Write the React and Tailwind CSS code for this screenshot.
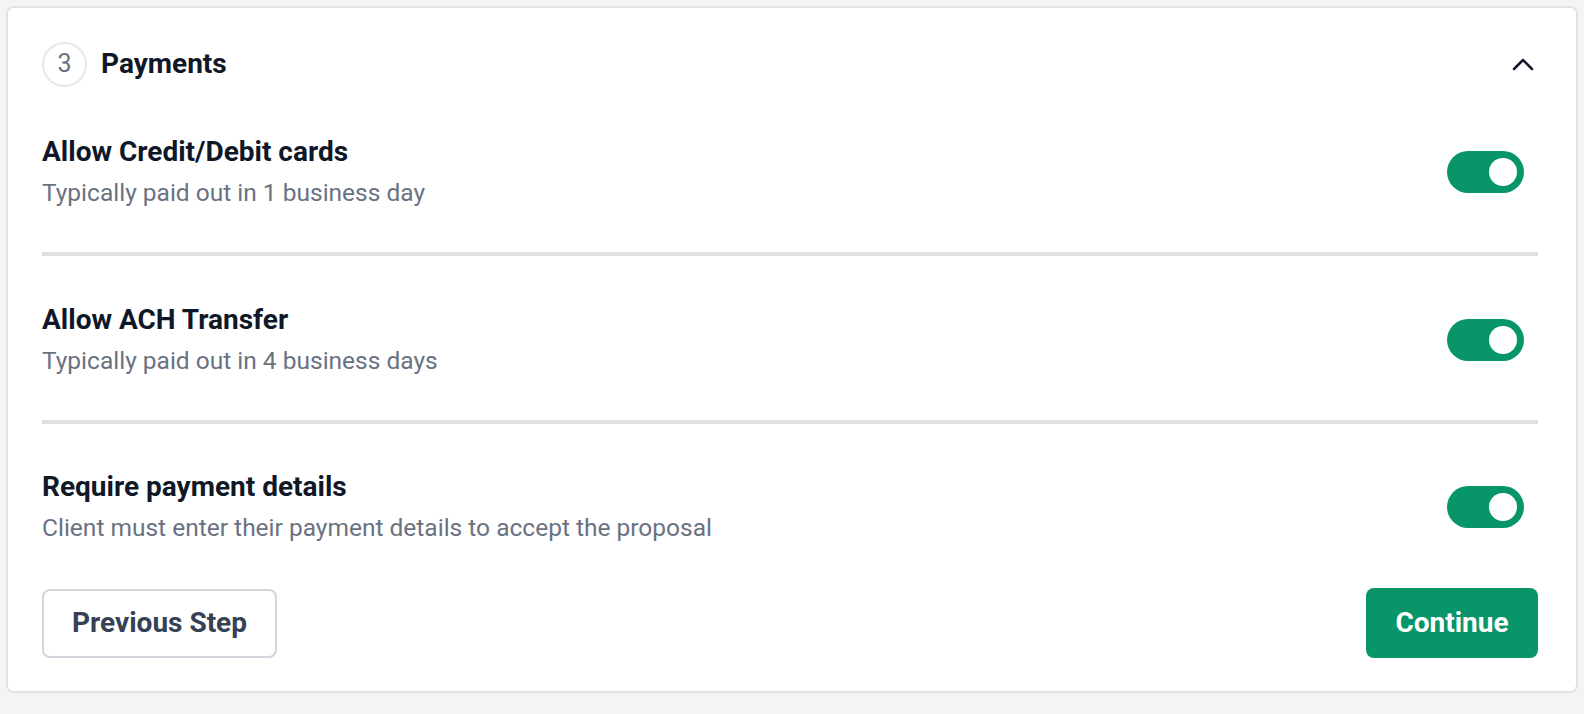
import React, { useState } from 'react';

const OPTIONS = [
  { id: 'card', title: 'Allow Credit/Debit cards', note: 'Typically paid out in 1 business day' },
  { id: 'ach', title: 'Allow ACH Transfer', note: 'Typically paid out in 4 business days' },
  { id: 'require', title: 'Require payment details', note: 'Client must enter their payment details to accept the proposal' },
];

function Toggle({ on, onChange }) {
  return (
    <button
      type="button"
      onClick={() => onChange(!on)}
      className={`mr-[14px] flex h-[42px] w-[77px] shrink-0 items-center rounded-full px-[7px] ${on ? 'justify-end bg-[#089569]' : 'justify-start bg-gray-300'}`}
    >
      <span className="block h-[28px] w-[28px] rounded-full bg-white" />
    </button>
  );
}

export default function App() {
  const [enabled, setEnabled] = useState({ card: true, ach: true, require: true });

  return (
    <div className="min-h-screen bg-[#f3f4f6] px-[6px] pt-[6px] font-['Roboto',_'Liberation_Sans',_sans-serif]">
      <div className="rounded-lg border-2 border-[#e1e2e4] bg-white pb-[33px] pl-[34px] pr-[38px] pt-[34px]">
        <div className="flex h-[44px] items-center">
          <div className="flex h-[45px] w-[45px] items-center justify-center rounded-full border-2 border-[#e5e7eb] text-[25px] text-gray-500">
            3
          </div>
          <h2 className="ml-[14px] text-[28px] font-bold text-gray-900">Payments</h2>
          <button type="button" className="ml-auto mr-[4px] text-gray-900">
            <svg width="22" height="13" viewBox="0 0 22 13" fill="none" stroke="currentColor" strokeWidth="2.5" strokeLinecap="round" strokeLinejoin="round">
              <path d="M2 11L11 2L20 11" />
            </svg>
          </button>
        </div>

        {OPTIONS.map((option, index) => (
          <div key={option.id}>
            <div className={`flex items-center justify-between ${index === 0 ? 'pb-[45px] pt-[50px]' : index === 1 ? 'pb-[45px] pt-[48px]' : 'pb-[46px] pt-[47px]'}`}>
              <div>
                <p className="text-[28px] font-bold leading-[32px] text-gray-900">{option.title}</p>
                <p className="mt-[11px] text-[24.5px] leading-[28px] text-gray-500">{option.note}</p>
              </div>
              <Toggle
                on={enabled[option.id]}
                onChange={(value) => setEnabled((prev) => ({ ...prev, [option.id]: value }))}
              />
            </div>
            {index < OPTIONS.length - 1 && <div className="h-[4px] bg-[#e0e0e0]" />}
          </div>
        ))}

        <div className="flex items-center justify-between">
          <button type="button" className="h-[69px] w-[235px] rounded-lg border-2 border-gray-300 text-[28px] font-bold text-gray-700">
            Previous Step
          </button>
          <button type="button" className="h-[70px] w-[172px] rounded-lg bg-[#089569] text-[28px] font-bold text-white">
            Continue
          </button>
        </div>
      </div>
    </div>
  );
}
